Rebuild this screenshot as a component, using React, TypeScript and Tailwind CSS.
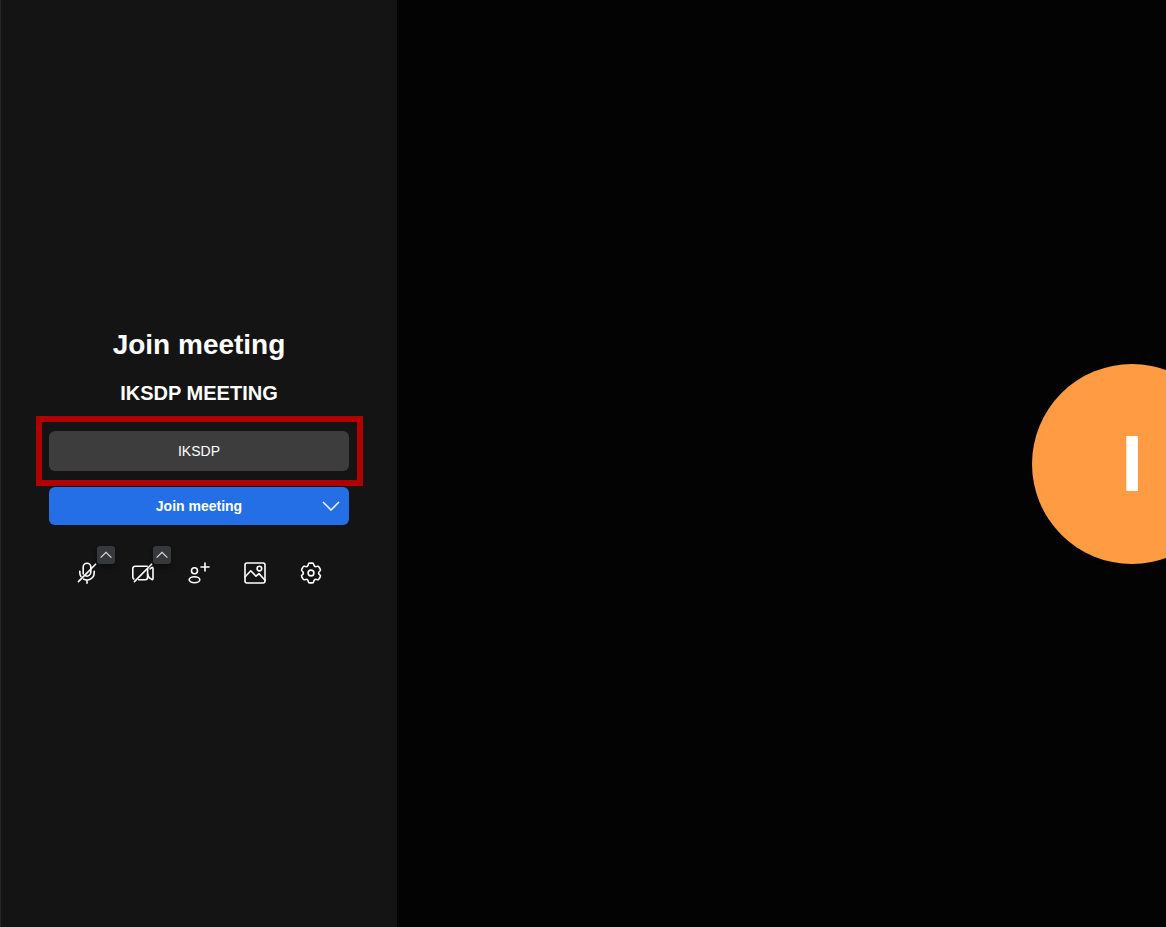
import { useState, type ReactNode } from "react";

function Icon({ children }: { children: ReactNode }) {
  return (
    <svg
      viewBox="0 0 24 24"
      className="size-6"
      fill="none"
      stroke="currentColor"
      strokeWidth="1.6"
      strokeLinecap="round"
      strokeLinejoin="round"
      aria-hidden="true"
    >
      {children}
    </svg>
  );
}

const micIcon = (
  <Icon>
    <path d="M8.2 13V6.1a3.8 3.8 0 0 1 7.6 0v5.2a3.8 3.8 0 0 1-5.2 3.5" />
    <path d="M4.8 10.3v1.4a7.2 7.2 0 0 0 1.2 3.9M8.6 18.1a7.2 7.2 0 0 0 10.6-6.4v-1.4M12 19v3.2" />
    <path d="M3.4 20.6L20.6 3.2" />
  </Icon>
);

const cameraIcon = (
  <Icon>
    <path d="M2.8 18a2.4 2.4 0 0 1-1-2V7.6a2.4 2.4 0 0 1 2.4-2.4h12M7.6 18.7h6.6a2.4 2.4 0 0 0 2.4-2.4V8.4" />
    <path d="M16.6 13.2c.2 1.8.8 2.8 2 3.7l2.1 1.5c.6.4 1.3.1 1.3-.6V7.2c0-.7-.7-1-1.3-.6l-1.6 1.2" />
    <path d="M3.4 20.6L20.6 3.2" />
  </Icon>
);

const inviteIcon = (
  <Icon>
    <circle cx="7.5" cy="9.8" r="3" />
    <ellipse cx="7.5" cy="18.7" rx="5.3" ry="3" />
    <path d="M18 2v8M14 6h8" />
  </Icon>
);

const backgroundIcon = (
  <Icon>
    <rect x="2" y="2" width="20" height="20" rx="2" />
    <circle cx="16.4" cy="7.6" r="2.3" />
    <path d="M2.2 15.8l5.6-6 5.2 5.4 3-2.6 6 6.6" />
  </Icon>
);

const settingsIcon = (
  <Icon>
    {[0, 60, 120, 180, 240, 300].map((angle) => (
      <path
        key={angle}
        transform={`translate(12 12) rotate(${angle})`}
        d="M-3.8-6.6C-2.9-7.1-2.8-7.5-2.7-8.6Q-2.5-9.9-1.4-9.9H1.4Q2.5-9.9 2.7-8.6C2.8-7.5 2.9-7.1 3.8-6.6"
      />
    ))}
    <circle cx="12" cy="12" r="2.9" />
  </Icon>
);

const tools = [
  { label: "Unmute microphone", icon: micIcon, menu: "Audio settings" },
  { label: "Start camera", icon: cameraIcon, menu: "Video settings" },
  { label: "Invite people", icon: inviteIcon },
  { label: "Select background", icon: backgroundIcon },
  { label: "Settings", icon: settingsIcon },
];

function Tool({ label, icon, menu }: { label: string; icon: ReactNode; menu?: string }) {
  return (
    <div className="relative flex h-[54px] w-14 items-center justify-center">
      <button type="button" aria-label={label} className="flex size-10 items-center justify-center text-white">
        {icon}
      </button>
      {menu && (
        <button
          type="button"
          aria-label={menu}
          className="absolute top-0 right-0 flex size-[18px] items-center justify-center rounded-[3px] bg-[#36383c] text-[#d8d8d8] shadow-md shadow-black/30"
        >
          <svg viewBox="0 0 18 18" className="size-[18px]" fill="none" stroke="currentColor" strokeWidth="1.3" aria-hidden="true">
            <path d="M3.6 11.6L9 6.4l5.4 5.2" />
          </svg>
        </button>
      )}
    </div>
  );
}

export default function App() {
  const [name, setName] = useState("IKSDP");

  return (
    <div className="flex min-h-screen overflow-hidden bg-[#030303] font-['Liberation_Sans',Arial,sans-serif] text-white">
      <section className="flex w-[397px] shrink-0 flex-col items-center justify-center border-l border-[#272324] bg-[#141414] pt-0.5">
        <h1 className="text-[28px] leading-8 font-bold">Join meeting</h1>
        <h2 className="mt-5 text-xl leading-6 font-bold">IKSDP MEETING</h2>

        <form className="mt-[26px] w-[300px]" onSubmit={(e) => e.preventDefault()}>
          <div className="relative">
            <input
              type="text"
              aria-label="Your name"
              value={name}
              onChange={(e) => setName(e.target.value)}
              className="block h-10 w-full rounded-md bg-[#3d3d3d] px-4 text-center text-sm text-white outline-none"
            />
            <div className="pointer-events-none absolute -inset-y-[15px] -right-[14px] -left-[13px] border-6 border-[#b20000]" />
          </div>

          <div className="mt-4 flex h-[38px] rounded-md bg-[#246fe5]">
            <button type="submit" className="flex-1 pl-9 text-sm font-bold">
              Join meeting
            </button>
            <button type="button" aria-label="More ways to join" className="flex w-9 items-center justify-center">
              <svg viewBox="0 0 24 24" className="size-6" fill="none" stroke="currentColor" strokeWidth="1.5" aria-hidden="true">
                <path d="M4 8l8 8 8-8" />
              </svg>
            </button>
          </div>
        </form>

        <div className="mt-[21px] flex">
          {tools.map((tool) => (
            <Tool key={tool.label} {...tool} />
          ))}
        </div>
      </section>

      <main className="flex min-w-0 flex-1 items-center justify-end overflow-hidden">
        <div className="-mr-[66px] flex size-[200px] shrink-0 items-center justify-center rounded-full bg-[#ff9b42] text-[80px] leading-none font-bold">
          I
        </div>
      </main>
    </div>
  );
}
